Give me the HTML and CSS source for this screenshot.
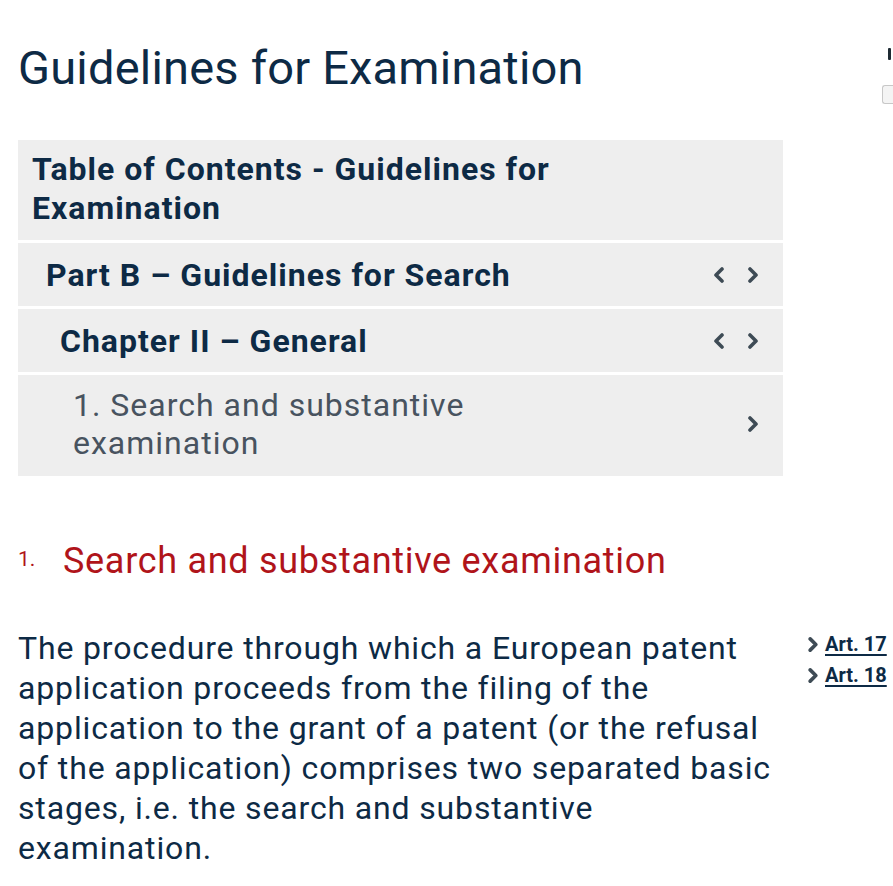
FILE: index.html
```html
<!DOCTYPE html>
<html lang="en">
<head>
    <meta charset="UTF-8">
    <meta name="viewport" content="width=device-width, initial-scale=1.0">
    <title>Guidelines for Examination</title>
    <link rel="stylesheet" href="styles.css">
</head>
<body>
    <div class="page">
        <div class="top-bar">
            <h1 class="page-title">Guidelines for Examination</h1>
            <div class="side-tools">
                <span class="tool-mark"></span>
                <span class="tool-box"></span>
            </div>
        </div>

        <nav class="toc">
            <div class="toc-head">Table of Contents - Guidelines for Examination</div>
            <div class="toc-row level-1">
                <span class="toc-label">Part B – Guidelines for Search</span>
                <span class="toc-nav">
                    <svg class="chev" viewBox="0 0 10 16"><polyline points="8,2 2,8 8,14"/></svg>
                    <svg class="chev" viewBox="0 0 10 16"><polyline points="2,2 8,8 2,14"/></svg>
                </span>
            </div>
            <div class="toc-row level-2">
                <span class="toc-label">Chapter II – General</span>
                <span class="toc-nav">
                    <svg class="chev" viewBox="0 0 10 16"><polyline points="8,2 2,8 8,14"/></svg>
                    <svg class="chev" viewBox="0 0 10 16"><polyline points="2,2 8,8 2,14"/></svg>
                </span>
            </div>
            <div class="toc-row level-3">
                <span class="toc-label">1. Search and substantive examination</span>
                <span class="toc-nav">
                    <svg class="chev" viewBox="0 0 10 16"><polyline points="2,2 8,8 2,14"/></svg>
                </span>
            </div>
        </nav>

        <h2 class="section-title"><span class="section-num">1.</span>Search and substantive examination</h2>

        <div class="section-body">
            <p class="text">The procedure through which a European patent application proceeds from the filing of the application to the grant of a patent (or the refusal of the application) comprises two separated basic stages, i.e. the search and substantive examination.</p>
            <ul class="refs">
                <li><svg class="chev small" viewBox="0 0 10 16"><polyline points="2,2 8,8 2,14"/></svg><a href="#">Art. 17</a></li>
                <li><svg class="chev small" viewBox="0 0 10 16"><polyline points="2,2 8,8 2,14"/></svg><a href="#">Art. 18</a></li>
            </ul>
        </div>
    </div>
</body>
</html>
```

FILE: styles.css
```css
body {
    margin: 0;
    font-family: Roboto, "Noto Sans", Arial, sans-serif;
    color: #0d2a45;
    background-color: #fff;
    overflow: hidden;
}
.page {
    padding: 0 0 0 18px;
}
.top-bar {
    display: flex;
    justify-content: space-between;
    align-items: flex-start;
    height: 104px;
}
.page-title {
    margin: 38px 0 0 0;
    font-size: 47px;
    font-weight: 400;
    line-height: 60px;
    letter-spacing: 0.2px;
}
.side-tools {
    display: flex;
    flex-direction: column;
    align-items: flex-end;
    padding-top: 48px;
}
.tool-mark {
    display: block;
    width: 3px;
    height: 12px;
    background-color: #1e2a33;
    border-radius: 1px;
    margin-right: 2px;
}
.tool-box {
    display: block;
    width: 10px;
    height: 17px;
    margin-top: 25px;
    border: 1px solid #c8c8c8;
    border-right: none;
    border-radius: 3px 0 0 3px;
    background-color: #f4f4f4;
}
.toc {
    width: 765px;
    margin-top: 36px;
    background-color: #eee;
}
.toc-head {
    padding: 10px 60px 12px 14px;
    font-size: 32px;
    font-weight: 700;
    line-height: 39px;
    letter-spacing: 1px;
    border-bottom: 3px solid #fff;
}
.toc-row {
    display: flex;
    align-items: center;
    justify-content: space-between;
    height: 63px;
    padding-right: 25px;
    font-size: 32px;
    letter-spacing: 1px;
    border-bottom: 3px solid #fff;
}
.toc-row:last-child {
    border-bottom: none;
}
.level-1 {
    padding-left: 28px;
    font-weight: 700;
}
.level-2 {
    padding-left: 42px;
    font-weight: 700;
}
.level-3 {
    height: auto;
    padding: 11px 25px 14px 55px;
    color: #48535f;
    line-height: 38px;
}
.level-3 .toc-label {
    width: 420px;
}
.toc-nav {
    display: flex;
    gap: 24px;
    align-items: center;
}
.chev {
    width: 10px;
    height: 16px;
}
.chev polyline {
    fill: none;
    stroke: #3e4b55;
    stroke-width: 3.6;
    stroke-linecap: round;
    stroke-linejoin: round;
}
.section-title {
    margin: 61px 0 0 0;
    color: #b0141a;
    font-size: 36px;
    font-weight: 400;
    line-height: 44px;
    letter-spacing: 0.7px;
}
.section-num {
    display: inline-block;
    width: 45px;
    font-size: 21px;
    letter-spacing: 0;
    vertical-align: 7px;
}
.section-body {
    display: flex;
    margin-top: 45px;
}
.text {
    width: 764px;
    flex-shrink: 0;
    margin: 0;
    font-size: 32px;
    line-height: 40px;
    letter-spacing: 0.85px;
}
.refs {
    list-style: none;
    margin: 1px 0 0 26px;
    padding: 0;
}
.refs li {
    display: flex;
    align-items: center;
    gap: 7px;
    line-height: 31px;
}
.chev.small {
    width: 10px;
    height: 15px;
}
.chev.small polyline {
    stroke-width: 3.8;
}
.refs a {
    color: #0d2a45;
    font-size: 20px;
    font-weight: 700;
    text-decoration: underline;
    text-decoration-thickness: 2px;
    text-underline-offset: 3px;
}
```
